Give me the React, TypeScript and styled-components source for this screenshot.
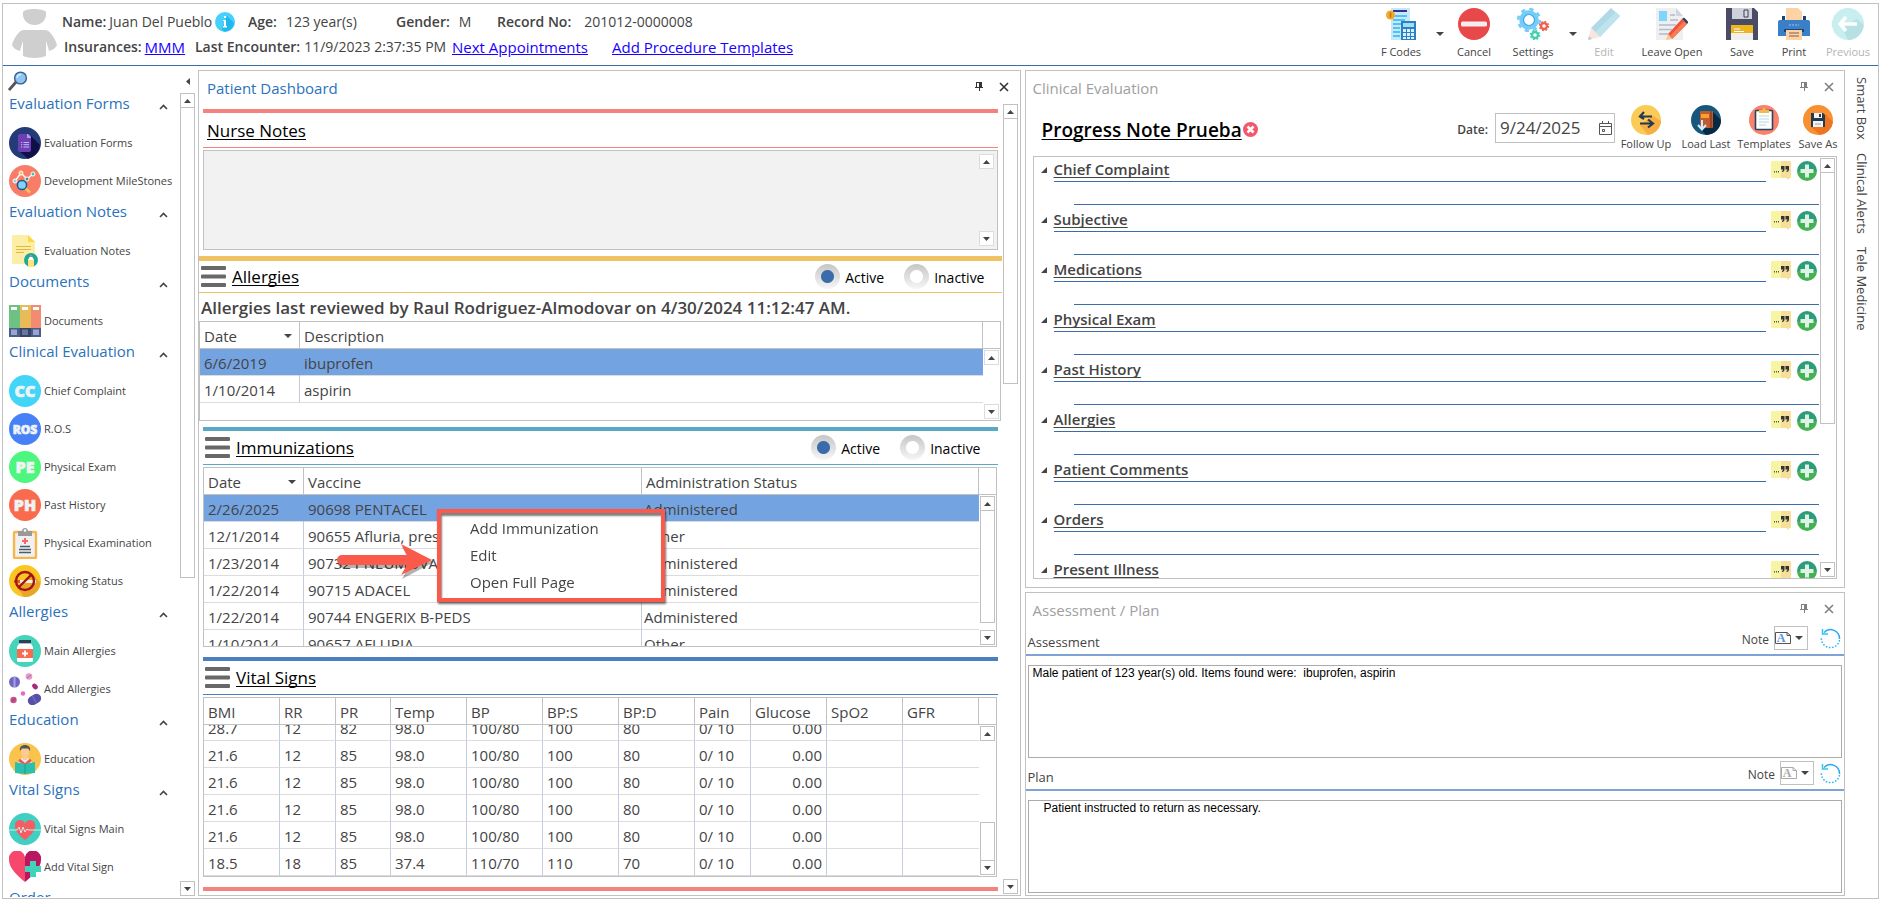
import React, { useEffect, useRef } from "react";
import styled, { createGlobalStyle, css } from "styled-components";

const color = {
  line: "#c1c1c1",
  softLine: "#dcdcdc",
  text: "#444444",
  blue: "#2a72bd",
  rule: "#3a6bab",
  select: "#74a3e1",
  muted: "#a0a0a0",
  salmon: "#f48380",
  amber: "#efc363",
  teal: "#58a9c6",
  royal: "#4a80bf",
};

const GlobalStyle = createGlobalStyle`
  * { box-sizing: border-box; }
  body {
    margin: 0;
    background: #ffffff;
    color: ${color.text};
    font-family: "Open Sans", "Noto Sans", sans-serif;
    font-size: 15px;
    line-height: 20px;
  }
  button, input, textarea { font: inherit; color: inherit; margin: 0; }
  button { border: 0; padding: 0; background: none; }
  svg { display: block; flex: none; }
  h1, h2, h3, p { margin: 0; font-weight: 400; }
`;

const Shell = styled.div`
  height: 100vh;
  padding: 3px 4px 4px 2px;
`;

const Frame = styled.div`
  height: 100%;
  display: flex;
  flex-direction: column;
  border: 1px solid ${color.line};
`;

/* ---------- patient header ---------- */

const Header = styled.header`
  flex: none;
  height: 62px;
  display: flex;
  border-bottom: 1px solid ${color.rule};
`;

const Avatar = styled.div`
  padding: 4px 5px 0 9px;
`;

const PatientInfo = styled.div`
  flex: 1;
  min-width: 0;
  display: flex;
  flex-direction: column;
  white-space: nowrap;
  padding-top: 5px;
`;

const InfoLine = styled.div<{ $indent?: number }>`
  display: flex;
  align-items: center;
  height: 25px;
  padding-left: ${(p) => p.$indent ?? 0}px;
`;

const Field = styled.div<{ $w?: number; $gap?: number }>`
  display: flex;
  align-items: center;
  gap: ${(p) => p.$gap ?? 4}px;
  width: ${(p) => (p.$w ? `${p.$w}px` : "auto")};
`;

const FieldLabel = styled.span`
  font-weight: 600;
  font-size: 14px;
`;

const FieldValue = styled.span`
  font-size: 14px;
`;

const InfoLink = styled.a`
  color: #1a00ff;
  font-size: 15px;
`;

const Toolbar = styled.div`
  display: flex;
  padding: 4px 2px 0 0;
`;

const ToolButton = styled.button<{ $w: number }>`
  width: ${(p) => p.$w}px;
  height: 52px;
  display: flex;
  flex-direction: column;
  align-items: center;
  justify-content: space-between;
  font-size: 11px;
  line-height: 16px;
  white-space: nowrap;
  &:disabled { color: #b4b4b4; }
  &:disabled svg { opacity: 0.4; }
`;

const CaretButton = styled.button`
  width: 15px;
  height: 52px;
  display: flex;
  align-items: center;
  justify-content: center;
`;

/* ---------- body ---------- */

const Body = styled.div`
  flex: 1;
  min-height: 0;
  display: flex;
`;

const Sidebar = styled.aside`
  flex: none;
  width: 195px;
  display: flex;
  flex-direction: column;
  padding: 4px 3px 1px 5px;
`;

const SidebarTop = styled.div`
  flex: none;
  height: 22px;
  display: flex;
  justify-content: space-between;
  padding-right: 5px;
`;

const SidebarBody = styled.div`
  flex: 1;
  min-height: 0;
  display: flex;
`;

const Nav = styled.nav`
  flex: 1;
  min-width: 0;
  overflow: hidden;
`;

const NavHeading = styled.button`
  display: flex;
  align-items: center;
  justify-content: space-between;
  width: 100%;
  height: 22px;
  margin-bottom: 10px;
  padding: 0 12px 0 1px;
  color: ${color.blue};
  svg { margin-top: 8px; }
`;

const NavItem = styled.button`
  display: flex;
  align-items: center;
  gap: 3px;
  width: 100%;
  height: 38px;
  padding-left: 1px;
  font-size: 11px;
  white-space: nowrap;
`;

const SidebarScroll = styled.div`
  display: flex;
  padding: 1px 0;
`;

const Panel = styled.section<{ $basis?: number }>`
  display: flex;
  flex-direction: column;
  min-width: 0;
  min-height: 0;
  border: 1px solid ${color.line};
  flex: ${(p) => (p.$basis === undefined ? "none" : `1 1 ${p.$basis}px`)};
`;

const Workspace = styled.main`
  flex: 1;
  min-width: 0;
  display: flex;
  gap: 4px;
  padding: 4px 0 2px;
`;

const RightColumn = styled.div`
  flex: 1 1 0;
  min-width: 0;
  display: flex;
  flex-direction: column;
  gap: 4px;
`;

const PanelBar = styled.div<{ $active?: boolean }>`
  flex: none;
  height: 33px;
  display: flex;
  align-items: center;
  padding: 0 9px 2px ${(p) => (p.$active ? 8 : 7)}px;
  color: ${(p) => (p.$active ? "#333333" : "#808080")};
`;

const PanelTitle = styled.h2<{ $active?: boolean }>`
  flex: 1;
  padding-top: 2px;
  font-size: 15px;
  color: ${(p) => (p.$active ? color.blue : color.muted)};
`;

const BarButton = styled.button`
  width: 25px;
  height: 20px;
  display: flex;
  align-items: center;
  justify-content: center;
  &:last-child { width: 13px; margin-left: 6px; }
`;

/* ---------- scroll bars ---------- */

const Scroll = styled.div<{ $soft?: boolean }>`
  --edge: ${(p) => (p.$soft ? color.softLine : color.line)};
  flex: none;
  width: 15px;
  display: flex;
  flex-direction: column;
`;

const ScrollButton = styled.button`
  flex: none;
  height: 15px;
  display: flex;
  align-items: center;
  justify-content: center;
  border: 1px solid var(--edge);
  background: #ffffff;
`;

const ScrollGap = styled.div<{ $size: number }>`
  flex: ${(p) => p.$size} 1 0;
`;

const ScrollThumb = styled.div<{ $size: number; $end?: boolean }>`
  flex: ${(p) => p.$size} 1 0;
  border: solid var(--edge);
  border-width: ${(p) => (p.$end ? "1px 1px 0" : "0 1px 1px")};
  background: #ffffff;
`;

/* ---------- dashboard ---------- */

const DashBody = styled.div`
  flex: 1;
  min-height: 0;
  display: flex;
`;

const DashMain = styled.div`
  flex: 1;
  min-width: 0;
  overflow: hidden;
  padding-top: 5px;
`;

const DashScroll = styled.div`
  display: flex;
  padding: 0 2px 1px 1px;
`;

const Widget = styled.section<{ $tint: string; $wide?: boolean; $gap: number }>`
  position: relative;
  margin: 0 ${(p) => (p.$wide ? 0 : 4)}px ${(p) => p.$gap}px ${(p) => (p.$wide ? 0 : 4)}px;
  border-top: ${(p) => (p.$wide ? 5 : 4)}px solid ${(p) => p.$tint};
`;

const WidgetHead = styled.div<{ $tint: string; $h: number; $indent: number }>`
  display: flex;
  align-items: center;
  height: ${(p) => p.$h}px;
  padding: 0 17px 0 ${(p) => p.$indent}px;
  border-bottom: 1px solid ${(p) => p.$tint};
  color: #000000;
`;

const WidgetTitle = styled.h3`
  flex: 1;
  padding-top: 1px;
  font-size: 17px;
  text-decoration: underline;
  text-decoration-thickness: 1px;
  text-underline-offset: 2px;
  text-decoration-skip-ink: none;
`;

const MenuButton = styled.button`
  display: flex;
  margin-right: 6px;
`;

const Choice = styled.label`
  display: flex;
  align-items: center;
  gap: 5px;
  font-size: 14px;
  & + & { margin-left: 20px; }
`;

const ChoiceText = styled.span`
  padding-top: 2px;
`;

const Radio = styled.input`
  appearance: none;
  width: 25px;
  height: 25px;
  border-radius: 50%;
  background:
    radial-gradient(circle, #ffffff 6px, transparent 7px),
    linear-gradient(#c6c6c6, #f6f6f6);
  &:checked {
    background:
      radial-gradient(circle, ${color.rule} 6px, transparent 7px),
      linear-gradient(#c6c6c6, #f6f6f6);
  }
`;

const NurseBox = styled.div`
  display: flex;
  height: 100px;
  margin-top: 2px;
  padding: 3px;
  border: 1px solid ${color.line};
  background: #f2f2f2;
`;

const NurseText = styled.textarea`
  flex: 1;
  border: 0;
  padding: 0;
  resize: none;
  outline: 0;
  overflow: hidden;
  background: transparent;
`;

const Reviewed = styled.p`
  height: 28px;
  padding: 2px 2px 0;
  font-size: 17px;
  line-height: 26px;
  font-weight: 600;
  white-space: nowrap;
`;

const GridBox = styled.div<{ $h: number; $gap?: number }>`
  display: flex;
  height: ${(p) => p.$h}px;
  margin: ${(p) => p.$gap ?? 0}px 1px 0 0;
  border: 1px solid ${color.line};
`;

const GridView = styled.div`
  flex: 1;
  min-width: 0;
  overflow: hidden;
`;

const GridSide = styled.div`
  flex: none;
  width: 17px;
  display: flex;
  flex-direction: column;
`;

const GridCap = styled.div`
  flex: none;
  height: 27px;
  border-bottom: 1px solid ${color.line};
`;

const GridScroll = styled.div`
  flex: 1;
  min-height: 0;
  display: flex;
  padding: 1px;
`;

const Table = styled.table`
  width: 100%;
  table-layout: fixed;
  border-spacing: 0;
`;

const Th = styled.th`
  position: sticky;
  top: 0;
  height: 27px;
  padding: 2px 7px 0 4px;
  border-right: 1px solid ${color.line};
  border-bottom: 1px solid ${color.line};
  background: #ffffff;
  font-weight: 400;
  text-align: left;
  white-space: nowrap;
`;

const ThInner = styled.span`
  display: flex;
  align-items: center;
  justify-content: space-between;
`;

const Tr = styled.tr<{ $selected?: boolean }>`
  ${(p) =>
    p.$selected &&
    css`
      td { background: ${color.select}; background-clip: padding-box; border-right-color: ${color.select}; }
    `}
`;

const Td = styled.td<{ $right?: boolean; $tight?: boolean }>`
  height: 27px;
  padding: 2px 4px 0 ${(p) => (p.$tight ? 2 : 4)}px;
  border-right: 1px solid #c3cddb;
  border-bottom: 1px solid ${color.softLine};
  text-align: ${(p) => (p.$right ? "right" : "left")};
  white-space: nowrap;
  overflow: hidden;
  &:last-child { border-right: 0; }
`;

const ContextMenu = styled.div`
  position: absolute;
  left: 234px;
  top: 78px;
  z-index: 3;
  width: 228px;
  height: 93px;
  display: flex;
  flex-direction: column;
  justify-content: center;
  padding-bottom: 2px;
  border: 4px solid #fb5a4b;
  background: #ffffff;
  box-shadow: 1px 2px 2px rgba(0, 0, 0, 0.55), inset 1px 3px 2px rgba(0, 0, 0, 0.5);
`;

const ContextItem = styled.button`
  height: 27px;
  padding-left: 29px;
  text-align: left;
`;

const Pointer = styled.div`
  position: absolute;
  left: 134px;
  top: 112px;
  z-index: 4;
`;

/* ---------- clinical evaluation ---------- */

const NoteHead = styled.div`
  flex: none;
  height: 52px;
  display: flex;
  align-items: center;
  padding: 0 1px 0 16px;
`;

const NoteTitle = styled.h2`
  font-size: 19px;
  line-height: 24px;
  font-weight: 600;
  color: #000000;
  text-decoration: underline;
  text-decoration-thickness: 1px;
  text-underline-offset: 2px;
  text-decoration-skip-ink: none;
`;

const RemoveNote = styled.button`
  display: flex;
  margin: 0 auto 2px 1px;
`;

const DateLabel = styled.label`
  font-size: 12px;
  font-weight: 600;
  margin-right: 7px;
`;

const DateBox = styled.div`
  width: 120px;
  height: 30px;
  display: flex;
  align-items: center;
  margin: -4px 0 0;
  padding: 0 2px 0 4px;
  border: 1px solid ${color.line};
`;

const DateInput = styled.input`
  flex: 1;
  min-width: 0;
  border: 0;
  padding: 0;
  outline: 0;
  font-size: 17px;
`;

const NoteAction = styled.button<{ $w: number }>`
  width: ${(p) => p.$w}px;
  height: 50px;
  display: flex;
  flex-direction: column;
  align-items: center;
  font-size: 11px;
  line-height: 18px;
  white-space: nowrap;
`;

const TreeBox = styled.div`
  flex: 1;
  min-height: 0;
  display: flex;
  margin: 0 7px 8px;
  border: 1px solid ${color.line};
`;

const Tree = styled.div`
  flex: 1;
  min-width: 0;
  overflow: hidden;
`;

const TreeScroll = styled.div`
  display: flex;
  padding: 1px;
`;

const TreeRow = styled.div`
  display: flex;
  height: 25px;
`;

const TreeToggle = styled.button`
  width: 20px;
  display: flex;
  align-items: center;
  padding-left: 7px;
`;

const TreeName = styled.h3`
  flex: 1;
  border-bottom: 1px solid ${color.rule};
  padding-top: 2px;
  font-size: 15px;
  font-weight: 600;
  text-decoration: underline;
  text-decoration-thickness: 1px;
  text-underline-offset: 2px;
  text-decoration-skip-ink: none;
`;

const TreeActions = styled.div`
  display: flex;
  align-items: flex-start;
  gap: 6px;
  padding: 4px 2px 0 5px;
`;

const TreeBody = styled.div`
  height: 23px;
  margin: 0 0 2px 40px;
  border-bottom: 1px solid ${color.rule};
`;

/* ---------- assessment ---------- */

const BlockHead = styled.div`
  display: flex;
  align-items: center;
  height: 30px;
  padding: 0 3px 4px 2px;
  border-bottom: 2px solid #7ea3d4;
`;

const BlockLabel = styled.label`
  flex: 1;
  padding-top: 8px;
  font-size: 13px;
`;

const NoteWord = styled.span`
  padding-top: 4px;
  margin-right: 5px;
  font-size: 12px;
`;

const NoteButton = styled.button<{ $space: number }>`
  width: 34px;
  height: 24px;
  display: flex;
  align-items: center;
  gap: 4px;
  margin-right: ${(p) => p.$space}px;
  border: 1px solid ${color.line};
`;

const BlockText = styled.textarea<{ $indent?: boolean }>`
  display: block;
  height: 93px;
  margin: 9px 2px 3px;
  padding: 0 ${(p) => (p.$indent ? 15 : 4)}px;
  border: 1px solid #ababab;
  resize: none;
  outline: 0;
  color: #000000;
  font-family: "Liberation Sans", Arial, sans-serif;
  font-size: 12px;
  line-height: 14px;
  &:last-child { margin-bottom: 2px; }
`;

const Strip = styled.aside`
  flex: none;
  width: 33px;
  display: flex;
  flex-direction: column;
  align-items: center;
  gap: 13px;
  padding-top: 11px;
`;

const StripTab = styled.button`
  writing-mode: vertical-rl;
  font-size: 13px;
  line-height: 20px;
`;

/* ---------- glyphs ---------- */

const Caret = ({ up }: { up?: boolean }) => (
  <svg width="7" height="4" viewBox="0 0 7 4" fill="#444">
    <path d={up ? "M0 4L3.500 0L7 4Z" : "M0 0H7L3.500 4Z"} />
  </svg>
);

const DropCaret = () => (
  <svg width="8" height="4" viewBox="0 0 8 4" fill="#444">
    <path d="M0 0H8L4 4Z" />
  </svg>
);

const Pin = () => (
  <svg width="8" height="9" viewBox="0 0 8 9" fill="currentColor">
    <path d="M1 0H7V5H8V6H5V9H4V6H0V5H1ZM2 1V5H4V1Z" />
  </svg>
);

const Cross = () => (
  <svg width="10" height="10" viewBox="0 0 10 10" stroke="currentColor" strokeWidth="1.600">
    <path d="M1 1L9 9M9 1L1 9" />
  </svg>
);

const Chevron = () => (
  <svg width="9" height="6" viewBox="0 0 9 6" fill="none" stroke="#444" strokeWidth="1.600">
    <path d="M1 5L4.500 1.500L8 5" />
  </svg>
);

const Burger = () => (
  <svg width="25" height="21" viewBox="0 0 25 21" fill="#686868">
    <rect width="25" height="4" rx="1" />
    <rect y="8.500" width="25" height="4" rx="1" />
    <rect y="17" width="25" height="4" rx="1" />
  </svg>
);

const Person = () => (
  <svg width="45" height="50" viewBox="0 0 45 50" fill="#cfcfcf">
    <path d="M11 4C13 0 31 0 34 4C35 11 30 17 22.500 17S10 11 11 4Z" />
    <path d="M12 22H33C38 22 43 30 45 37C43 41 40 42 37 43C36 39 35 36 34 33V48C28 50.500 17 50.500 11 48V33C10 36 9 39 8 43C5 42 2 41 0 37C2 30 7 22 12 22Z" />
  </svg>
);

const Info = () => (
  <svg width="20" height="20" viewBox="0 0 20 20">
    <circle cx="10" cy="10" r="10" fill="#47d0fb" />
    <path d="M12 4L19 11A10 10 0 0 1 9 19.800L7 17Z" fill="#20b7ee" />
    <path d="M9 4H11V6H9ZM8 8H11V14H12V15.500H8V14H9V9H8Z" fill="#fff" />
  </svg>
);

const Magnifier = () => (
  <svg width="20" height="20" viewBox="0 0 20 20">
    <path d="M1 19L8 11" stroke="#555" strokeWidth="2.800" />
    <circle cx="12.500" cy="7" r="5.900" fill="#8ec5f6" stroke="#3c5a86" strokeWidth="1.400" />
    <path d="M9 7A4 4 0 0 1 13 3.500" stroke="#d5ecff" strokeWidth="1.500" fill="none" />
  </svg>
);

const Badge = ({ fill, text }: { fill: string; text: string }) => (
  <svg width="32" height="32" viewBox="0 0 32 32">
    <circle cx="16" cy="16" r="16" fill={fill} />
    <text
      x="16"
      y={text.length > 2 ? 20.500 : 22}
      textAnchor="middle"
      fontFamily="Open Sans, sans-serif"
      fontWeight="800"
      fontSize={text.length > 2 ? 12 : 16}
      fill="#eef3f3"
      stroke="#eef3f3"
      strokeWidth="0.700"
    >
      {text}
    </text>
  </svg>
);

const navIcons: Record<string, React.ReactNode> = {
  forms: (
    <svg width="32" height="32" viewBox="0 0 32 32">
      <circle cx="16" cy="16" r="16" fill="#253b78" />
      <path d="M22 9L31 18A16 16 0 0 1 19 31.700L10 24Z" fill="#111046" />
      <path d="M11 7H19L22 10V23A2 2 0 0 1 20 25H11A2 2 0 0 1 9 23V9A2 2 0 0 1 11 7Z" fill="#6c40b5" />
      <path d="M19 7L22 10V11H18V7Z" fill="#b49ae0" />
      <path d="M12 15.500H13.200M14.500 15.500H20M12 17.700H13.200M14.500 17.700H20M12 20H13.200M14.500 20H20" stroke="#c9b8ee" />
    </svg>
  ),
  milestones: (
    <svg width="32" height="32" viewBox="0 0 32 32">
      <circle cx="16" cy="16" r="16" fill="#f97c66" />
      <path d="M6 16L12 8L18 14L24 9" stroke="#fff" strokeWidth="1.400" fill="none" />
      <circle cx="6" cy="16" r="2" fill="#7ed6f0" stroke="#fff" />
      <circle cx="12" cy="8" r="2" fill="#f6c358" stroke="#fff" />
      <circle cx="18" cy="14" r="2" fill="#30988a" stroke="#fff" />
      <circle cx="24" cy="9" r="2" fill="#38c5b4" stroke="#fff" />
      <path d="M16 23L21 27.500" stroke="#f6c358" strokeWidth="2.600" />
      <circle cx="13" cy="20" r="4.600" fill="#78d5ff" stroke="#22568c" strokeWidth="1.500" />
    </svg>
  ),
  notes: (
    <svg width="32" height="32" viewBox="0 0 32 32">
      <path d="M3 0H19L26 7V29H3Z" fill="#fceea6" />
      <path d="M19 0L26 7H19Z" fill="#f9d93b" />
      <path d="M7 11.500H22M7 14.500H22M7 17.500H15" stroke="#e0b93c" strokeWidth="1.200" />
      <circle cx="22" cy="25" r="7" fill="#1fa79b" />
      <path d="M19 32V25L22 20L25 25V32Z" fill="#fce37a" />
      <path d="M19 25L22 20L25 25Z" fill="#fff" />
      <path d="M21 21.800L22 20L23 21.800Z" fill="#444" />
    </svg>
  ),
  documents: (
    <svg width="32" height="32" viewBox="0 0 32 32">
      <path d="M0 0H11V23H0Z" fill="#6dc283" />
      <path d="M11 0H22V23H11Z" fill="#e8bb58" />
      <path d="M22 0H32V23H22Z" fill="#f18b72" />
      <path d="M0 23H11V32H0ZM22 23H32V32H22Z" fill="#4d5c85" />
      <path d="M11 23H22V32H11Z" fill="#35446b" />
      <path d="M2 2H8V5H2ZM13 2H19V5H13ZM24 2H30V5H24Z" fill="#fff" />
      <path d="M2 24.500H8V30H2ZM24 24.500H30V30H24Z" fill="#98a5d2" />
      <path d="M13 24.500H19V30H13Z" fill="#687699" />
    </svg>
  ),
  cc: <Badge fill="#42d5f7" text="CC" />,
  ros: <Badge fill="#4781f7" text="ROS" />,
  pe: <Badge fill="#4df67d" text="PE" />,
  ph: <Badge fill="#fa6a4d" text="PH" />,
  exam: (
    <svg width="32" height="32" viewBox="0 0 32 32">
      <rect x="5" y="5" width="22" height="26" rx="1" fill="#f0f0f0" stroke="#f6b64c" strokeWidth="2.400" />
      <path d="M9 4H13C13 0 19 0 19 4H23V9H9Z" fill="#9a9a9a" />
      <circle cx="16" cy="3.500" r="1.300" fill="#fff" />
      <path d="M16 11V17M13 14H19" stroke="#f5696a" strokeWidth="2" />
      <path d="M11 19.500H21M10 22.500H22M10 25.500H22" stroke="#465e6c" strokeWidth="1.300" />
    </svg>
  ),
  smoking: (
    <svg width="32" height="32" viewBox="0 0 32 32">
      <circle cx="16" cy="16" r="16" fill="#fac61f" />
      <path d="M24 9L31.500 18A16 16 0 0 1 15 32L9 24Z" fill="#e9a52a" />
      <path d="M5 15H27V18H5Z" fill="#f4eee0" />
      <path d="M5 15H11V18H5Z" fill="#e0562d" />
      <circle cx="16" cy="16" r="9" fill="none" stroke="#a31414" strokeWidth="2.400" />
      <path d="M22.500 9.500L9.500 22.500" stroke="#a31414" strokeWidth="2.400" />
    </svg>
  ),
  allergies: (
    <svg width="32" height="32" viewBox="0 0 32 32">
      <circle cx="16" cy="16" r="16" fill="#44d4bb" />
      <rect x="10" y="5" width="12" height="3.500" fill="#2c4052" />
      <path d="M10 8.500H22L24 12V26A1.500 1.500 0 0 1 22.500 27H9.500A1.500 1.500 0 0 1 8 26V12Z" fill="#fff" />
      <rect x="8" y="14" width="16" height="9" fill="#f96b50" />
      <path d="M16 15.500V21.500M13 18.500H19" stroke="#fff" strokeWidth="1.800" />
    </svg>
  ),
  pills: (
    <svg width="32" height="32" viewBox="0 0 32 32">
      <circle cx="5.500" cy="9" r="5.500" fill="#6f66c2" />
      <path d="M5.500 4V14" stroke="#a79fe4" strokeWidth="2" />
      <circle cx="20" cy="3.500" r="3.300" fill="#e39ac7" />
      <path d="M18 5L22 2" stroke="#c563a4" />
      <ellipse cx="26" cy="13.500" rx="3.200" ry="2.300" fill="#a82978" transform="rotate(45 26 13.500)" />
      <circle cx="14" cy="20.500" r="2.200" fill="#ee65bd" />
      <circle cx="4.500" cy="27" r="3.200" fill="#c8548e" />
      <path d="M2.500 28.500L6.500 25.500" stroke="#93306a" />
      <rect x="18.500" y="22" width="14" height="9" rx="4.500" fill="#5850a8" transform="rotate(-30 25.500 26.500)" />
      <path d="M23.500 23L27 29.500" stroke="#8078cf" />
    </svg>
  ),
  education: (
    <svg width="32" height="32" viewBox="0 0 32 32">
      <circle cx="16" cy="16" r="16" fill="#f9c34c" />
      <path d="M9 20C9 16 12 15 16 15S23 16 23 20V24H9Z" fill="#eef1f2" />
      <path d="M11 15.500L16 20L21 15.500L23 18L16 23L9 18Z" fill="#ee5a52" />
      <path d="M12 7A4 5 0 0 1 20 7V10A4 4 0 0 1 12 10Z" fill="#fbcb94" />
      <path d="M14 12H18V17H14Z" fill="#fbcb94" />
      <path d="M11 8C10 4 13 2 16 2S22 4 21 8L19 5.500H13Z" fill="#555" />
      <path d="M6 19L16 21L26 19V30L16 31L6 30Z" fill="#2bbfae" />
      <path d="M16 21V31" stroke="#1c9c90" />
    </svg>
  ),
  vitals: (
    <svg width="32" height="32" viewBox="0 0 32 32">
      <circle cx="16" cy="16" r="16" fill="#40cfc0" />
      <path d="M16 27C10 22 6 18 6 13.500A5 5 0 0 1 16 11A5 5 0 0 1 26 13.500C26 18 22 22 16 27Z" fill="#f65c61" />
      <path d="M0 17H8L10 14L12 20L14 14L16 19L18 16L19 17H32" stroke="#c9f0ec" fill="none" />
    </svg>
  ),
  addVital: (
    <svg width="32" height="32" viewBox="0 0 32 32">
      <path d="M16 31C7 24 0 16 0 9A8 8 0 0 1 16 6Z" fill="#f8476c" />
      <path d="M16 31C25 24 32 16 32 9A8 8 0 0 0 16 6Z" fill="#ba1661" />
      <path d="M21 10H27V15H32V21H27V26H21V21H16V15H21Z" fill="#3fd3ba" />
    </svg>
  ),
};

const toolIcons: Record<string, React.ReactNode> = {
  codes: (
    <svg width="32" height="32" viewBox="0 0 32 32">
      <path d="M6 0H25V32H6Z" fill="#c5e9fb" />
      <path d="M8 3H22" stroke="#35338f" strokeWidth="2" />
      <path d="M8 8H22M8 12H20M8 16H16M8 20H15M8 24H15M8 28H15" stroke="#4fc4f4" strokeWidth="2" />
      <circle cx="5.500" cy="7" r="4.500" fill="#f3a927" />
      <path d="M5.500 4.500V9.500" stroke="#c26c10" strokeWidth="1.500" />
      <rect x="16" y="13" width="15" height="19" fill="#2b7fc4" />
      <path d="M18 15H29V19H18Z" fill="#a3dfe8" />
      <path d="M18 21H21V24H18ZM22 21H25V24H22ZM26 21H29V24H26ZM18 25H21V28H18ZM22 25H25V28H22ZM26 25H29V28H26ZM18 29H21V31H18ZM22 29H25V31H22ZM26 29H29V31H26Z" fill="#d8f0fb" />
    </svg>
  ),
  cancel: (
    <svg width="32" height="32" viewBox="0 0 32 32">
      <circle cx="16" cy="16" r="16" fill="#e84849" />
      <rect x="3" y="13.500" width="26" height="5" rx="1.500" fill="#f6eeee" />
    </svg>
  ),
  settings: (
    <svg width="32" height="32" viewBox="0 0 32 32" fill="none">
      <circle cx="12" cy="12" r="7.500" stroke="#74cdf8" strokeWidth="4.500" />
      <circle cx="12" cy="12" r="10.800" stroke="#74cdf8" strokeWidth="2.600" strokeDasharray="4.200 4.280" />
      <circle cx="12" cy="12" r="5.500" stroke="#3ba7e8" strokeWidth="1.200" />
      <circle cx="27" cy="18" r="3" stroke="#ef6250" strokeWidth="2.400" />
      <circle cx="27" cy="18" r="4.600" stroke="#ef6250" strokeWidth="1.400" strokeDasharray="1.800 1.810" />
      <circle cx="18" cy="27" r="3" stroke="#45d0ad" strokeWidth="2.400" />
      <circle cx="18" cy="27" r="4.600" stroke="#45d0ad" strokeWidth="1.400" strokeDasharray="1.800 1.810" />
    </svg>
  ),
  edit: (
    <svg width="32" height="32" viewBox="0 0 32 32">
      <path d="M3 20L23 0L32 8L12 29Z" fill="#3fa0bf" />
      <path d="M7 24L28 4L32 8L12 29Z" fill="#5eb8d5" />
      <path d="M3 20L12 29L0 32Z" fill="#f3bfae" />
      <path d="M1 28L4 31L0 32Z" fill="#777" />
    </svg>
  ),
  leave: (
    <svg width="32" height="32" viewBox="0 0 32 32">
      <path d="M0 0H20L27 8V32H0Z" fill="#efefef" />
      <path d="M20 0L27 8H20Z" fill="#cfd6dd" />
      <path d="M3 3H11V13H3Z" fill="#7fd4fb" />
      <path d="M14 7H19M14 12H22M3 17H20M3 21.500H16M3 26H12" stroke="#aebcd0" strokeWidth="1.500" />
      <path d="M12 26L26 11L31 16L16 31Z" fill="#f0503c" />
      <path d="M14 28L28 13L31 16L16 31Z" fill="#f77b55" />
      <path d="M26 11L28 9.500L32.500 14L31 16Z" fill="#2f3d57" />
      <path d="M12 26L16 31L10 32Z" fill="#f6c98e" />
    </svg>
  ),
  save: (
    <svg width="32" height="32" viewBox="0 0 32 32">
      <path d="M0 0H28L32 4V32H0Z" fill="#4a4c66" />
      <path d="M6 0H26V11H6Z" fill="#cfd2da" />
      <path d="M18 2H22V9H18Z" fill="#d9dbe2" stroke="#3b3d55" />
      <path d="M5 17H27V32H5Z" fill="#f0f0ee" />
      <path d="M5 17H27V25H5Z" fill="#eeb51c" />
      <path d="M8 21H14M8 23.500H18" stroke="#fff" strokeWidth="1.200" />
    </svg>
  ),
  print: (
    <svg width="32" height="32" viewBox="0 0 32 32">
      <path d="M8 0H20L24 4V12H8Z" fill="#fbd3a4" />
      <path d="M4 8H7V12H25V8H28V13H4Z" fill="#20426f" />
      <path d="M2 12H30A2 2 0 0 1 32 14V28H0V14A2 2 0 0 1 2 12Z" fill="#3a80c8" />
      <path d="M6 21H26V24H6Z" fill="#20426f" />
      <path d="M8 22H24V32H8Z" fill="#fbd3a4" />
      <path d="M11 25H21M11 28H21" stroke="#8b5b4d" strokeWidth="1.200" />
      <path d="M11 17H21" stroke="#9cc3ec" strokeDasharray="2 1" />
    </svg>
  ),
  previous: (
    <svg width="32" height="32" viewBox="0 0 32 32">
      <circle cx="16" cy="16" r="16" fill="#77d5d8" />
      <path d="M25 11L31.500 17A16 16 0 0 1 16 32L10 20Z" fill="#4cb3ba" />
      <path d="M25 16H8M14 9L8 16L14 23" stroke="#fff" strokeWidth="3.500" fill="none" />
    </svg>
  ),
};

const actionIcons: Record<string, React.ReactNode> = {
  follow: (
    <svg width="30" height="30" viewBox="0 0 30 30">
      <circle cx="15" cy="15" r="15" fill="#fbcb57" />
      <path d="M22 11L30 16A15 15 0 0 1 17 30L9 20Z" fill="#f6ad43" />
      <path d="M21 11.500H9M13 7L9 11.500L13 14M9 18.500H21M17 14.500L22 18.500L17 22.500" stroke="#263a4e" strokeWidth="2.200" fill="none" />
    </svg>
  ),
  load: (
    <svg width="30" height="30" viewBox="0 0 30 30">
      <circle cx="15" cy="15" r="15" fill="#17577d" />
      <path d="M22 7L30 15A15 15 0 0 1 15 30L9 23Z" fill="#062a44" />
      <rect x="9" y="6" width="13" height="17" rx="1" fill="#c25a31" />
      <path d="M10 9H18V13H10Z" fill="#f4a328" />
      <path d="M20 6V23" stroke="#8e3d1e" strokeWidth="1.500" />
      <path d="M11 15V24M7 20L11 24.500L15 20" stroke="#cdeeff" strokeWidth="2" fill="none" />
    </svg>
  ),
  templates: (
    <svg width="30" height="30" viewBox="0 0 30 30">
      <circle cx="15" cy="15" r="15" fill="#f8826b" />
      <rect x="6.500" y="5.500" width="17" height="19" rx="1" fill="#fff" stroke="#294560" strokeWidth="1.600" />
      <path d="M10 5H13L15 2.500L17 5H20V8H10Z" fill="#f6b84c" />
      <path d="M10 11H20M10 14H20M10 17H20M10 20H17" stroke="#b7d9e4" strokeWidth="1.200" />
    </svg>
  ),
  saveAs: (
    <svg width="30" height="30" viewBox="0 0 30 30">
      <circle cx="15" cy="15" r="15" fill="#f88f31" />
      <path d="M22 9L30 17A15 15 0 0 1 17 30L8 22Z" fill="#ef7421" />
      <path d="M8 8H20L22 10V22H8Z" fill="#253a4e" />
      <path d="M11 8H19V13H11ZM10 16H20V22H10Z" fill="#f1f3f4" />
      <path d="M16 9H18V12H16Z" fill="#253a4e" />
      <path d="M12 19H18" stroke="#9aa7b2" />
    </svg>
  ),
};

const RemoveIcon = () => (
  <svg width="15" height="15" viewBox="0 0 15 15">
    <circle cx="7.500" cy="7.500" r="7.500" fill="#f4566b" />
    <path d="M4.500 4.500L10.500 10.500M10.500 4.500L4.500 10.500" stroke="#fff" strokeWidth="2.600" />
  </svg>
);

const CalendarIcon = () => (
  <svg width="13" height="14" viewBox="0 0 13 14" fill="none" stroke="#555">
    <path d="M0.500 2.500H12.500V13.500H0.500ZM0.500 5.500H12.500M3.500 0V3M9.500 0V3M3.500 8.500H5.500V10.500H3.500Z" />
  </svg>
);

const TreeCaret = () => (
  <svg width="6" height="6" viewBox="0 0 6 6" fill="#444">
    <path d="M6 0V6H0Z" />
  </svg>
);

const QuoteIcon = () => (
  <svg width="20" height="19" viewBox="0 0 20 19">
    <path d="M1 0H10V17H1A1 1 0 0 1 0 16V1A1 1 0 0 1 1 0Z" fill="#f7f5a3" />
    <path d="M10 0H19A1 1 0 0 1 20 1V16A1 1 0 0 1 19 17H18V19L15 17H10Z" fill="#f5df9b" />
    <path d="M3 10.800H9" stroke="#555" strokeDasharray="1 1" strokeWidth="1.400" />
    <path d="M10 5H13.500V8.500C13.500 10 12.500 11 11 11V10C11.800 9.800 12 9 12 8.500H10ZM14.500 5H18V8.500C18 10 17 11 15.500 11V10C16.300 9.800 16.500 9 16.500 8.500H14.500Z" fill="#333" />
  </svg>
);

const AddIcon = () => (
  <svg width="20" height="20" viewBox="0 0 20 20">
    <path d="M0 10A10 10 0 0 1 20 10Z" fill="#2c9c7b" />
    <path d="M0 10A10 10 0 0 0 20 10Z" fill="#44b155" />
    <path d="M8 3.500H12V8H16.500V12H12V16.500H8V12H3.500V8H8Z" fill="#def3e4" />
  </svg>
);

const ResetIcon = () => (
  <svg width="21" height="21" viewBox="0 0 21 21" fill="none">
    <path d="M4 4.500A9 9 0 0 1 19.500 11" stroke="#2ba8f4" strokeWidth="1.500" />
    <path d="M19.500 12A9 9 0 0 1 1.500 9" stroke="#2bb4f4" strokeWidth="1.500" strokeDasharray="1.600 1.600" />
    <path d="M2.500 1V6H8" stroke="#2fc3f3" strokeWidth="1.500" />
  </svg>
);

const TextIcon = ({ ink, edge }: { ink: string; edge: string }) => (
  <svg width="16" height="12" viewBox="0 0 16 12" fill="none">
    <path d="M0.500 0.500H12L15.500 3.500V11.500H0.500ZM12 0.500V3.500H15.500" stroke={edge} />
    <text x="6" y="10" textAnchor="middle" fontFamily="Liberation Serif, serif" fontWeight="700" fontSize="12" fill={ink}>
      A
    </text>
  </svg>
);

const ArrowMark = () => (
  <svg width="98" height="36" viewBox="0 0 98 36">
    <path d="M5 13H70L64 2L96 17L64 34L70 23H5A5 5 0 0 1 5 13Z" fill="#000" opacity="0.300" transform="translate(1 2)" />
    <path d="M5 12H70L64 1L95 17L64 32L70 22H5A5 5 0 0 1 5 12Z" fill="#fb5a4b" />
  </svg>
);

/* ---------- data ---------- */

const navGroups = [
  { name: "Evaluation Forms", items: [["forms", "Evaluation Forms"], ["milestones", "Development MileStones"]] },
  { name: "Evaluation Notes", items: [["notes", "Evaluation Notes"]] },
  { name: "Documents", items: [["documents", "Documents"]] },
  {
    name: "Clinical Evaluation",
    items: [
      ["cc", "Chief Complaint"],
      ["ros", "R.O.S"],
      ["pe", "Physical Exam"],
      ["ph", "Past History"],
      ["exam", "Physical Examination"],
      ["smoking", "Smoking Status"],
    ],
  },
  { name: "Allergies", items: [["allergies", "Main Allergies"], ["pills", "Add Allergies"]] },
  { name: "Education", items: [["education", "Education"]] },
  { name: "Vital Signs", items: [["vitals", "Vital Signs Main"], ["addVital", "Add Vital Sign"]] },
  { name: "Order", items: [] as string[][] },
];

const allergies = [
  ["6/6/2019", "ibuprofen"],
  ["1/10/2014", "aspirin"],
];

const immunizations = [
  ["2/26/2025", "90698 PENTACEL", "Administered"],
  ["12/1/2014", "90655 Afluria, preservative", "Other"],
  ["1/23/2014", "90732 PNEUMOVAX", "Administered"],
  ["1/22/2014", "90715 ADACEL", "Administered"],
  ["1/22/2014", "90744 ENGERIX B-PEDS", "Administered"],
  ["1/10/2014", "90657 AFLURIA", "Other"],
];

const vitalColumns: [string, number | undefined][] = [
  ["BMI", 76],
  ["RR", 56],
  ["PR", 55],
  ["Temp", 76],
  ["BP", 76],
  ["BP:S", 76],
  ["BP:D", 76],
  ["Pain", 56],
  ["Glucose", 76],
  ["SpO2", 76],
  ["GFR", undefined],
];

const steady = ["21.6", "12", "85", "98.0", "100/80", "100", "80", "0/ 10", "0.00", "", ""];
const vitals = [
  ["28.7", "12", "82", "98.0", "100/80", "100", "80", "0/ 10", "0.00", "", ""],
  steady,
  steady,
  steady,
  steady,
  ["18.5", "18", "85", "37.4", "110/70", "110", "70", "0/ 10", "0.00", "", ""],
];

const noteSections = [
  "Chief Complaint",
  "Subjective",
  "Medications",
  "Physical Exam",
  "Past History",
  "Allergies",
  "Patient Comments",
  "Orders",
  "Present Illness",
];

/* ---------- composed parts ---------- */

const ScrollBar = ({
  before = 0,
  thumb = 0,
  after = 1,
  soft,
}: {
  before?: number;
  thumb?: number;
  after?: number;
  soft?: boolean;
}) => (
  <Scroll $soft={soft}>
    <ScrollButton aria-label="Scroll up">
      <Caret up />
    </ScrollButton>
    {before > 0 && <ScrollGap $size={before} />}
    {thumb > 0 && <ScrollThumb $size={thumb} $end={before > 0} />}
    {after > 0 && <ScrollGap $size={after} />}
    <ScrollButton aria-label="Scroll down">
      <Caret />
    </ScrollButton>
  </Scroll>
);

const TitleBar = ({ title, active }: { title: string; active?: boolean }) => (
  <PanelBar $active={active}>
    <PanelTitle $active={active}>{title}</PanelTitle>
    <BarButton aria-label="Pin">
      <Pin />
    </BarButton>
    <BarButton aria-label="Close">
      <Cross />
    </BarButton>
  </PanelBar>
);

const StatusChoice = ({ name }: { name: string }) => (
  <>
    <Choice>
      <Radio type="radio" name={name} defaultChecked />
      <ChoiceText>Active</ChoiceText>
    </Choice>
    <Choice>
      <Radio type="radio" name={name} />
      <ChoiceText>Inactive</ChoiceText>
    </Choice>
  </>
);

interface DataGridProps {
  columns: [string, number | undefined][];
  rows: string[][];
  height: number;
  gap?: number;
  sorted?: boolean;
  selected?: number;
  rightColumn?: number;
  tightColumn?: number;
  atEnd?: boolean;
  scroll: React.ReactNode;
}

const DataGrid = (p: DataGridProps) => {
  const view = useRef<HTMLDivElement>(null);
  useEffect(() => {
    if (p.atEnd && view.current) view.current.scrollTop = view.current.scrollHeight;
  }, [p.atEnd]);
  return (
    <GridBox $h={p.height} $gap={p.gap}>
      <GridView ref={view}>
        <Table>
          <colgroup>
            {p.columns.map(([name, width]) => (
              <col key={name} width={width} />
            ))}
          </colgroup>
          <thead>
            <tr>
              {p.columns.map(([name], i) => (
                <Th key={name}>
                  <ThInner>
                    {name}
                    {p.sorted && i === 0 && <DropCaret />}
                  </ThInner>
                </Th>
              ))}
            </tr>
          </thead>
          <tbody>
            {p.rows.map((row, r) => (
              <Tr key={r} $selected={r === p.selected}>
                {row.map((cell, c) => (
                  <Td key={c} $right={c === p.rightColumn} $tight={c === p.tightColumn}>
                    {cell}
                  </Td>
                ))}
              </Tr>
            ))}
          </tbody>
        </Table>
      </GridView>
      <GridSide>
        <GridCap />
        <GridScroll>{p.scroll}</GridScroll>
      </GridSide>
    </GridBox>
  );
};

const Tool = ({ icon, label, w, disabled }: { icon: string; label: string; w: number; disabled?: boolean }) => (
  <ToolButton $w={w} disabled={disabled}>
    {toolIcons[icon]}
    {label}
  </ToolButton>
);

const PatientHeader = () => (
  <Header>
    <Avatar>
      <Person />
    </Avatar>
    <PatientInfo>
      <InfoLine>
        <Field $w={186} $gap={3}>
          <FieldLabel>Name:</FieldLabel>
          <FieldValue>Juan Del Pueblo</FieldValue>
          <Info />
        </Field>
        <Field $w={148} $gap={9}>
          <FieldLabel>Age:</FieldLabel>
          <FieldValue>123 year(s)</FieldValue>
        </Field>
        <Field $w={101} $gap={9}>
          <FieldLabel>Gender:</FieldLabel>
          <FieldValue>M</FieldValue>
        </Field>
        <Field $gap={13}>
          <FieldLabel>Record No:</FieldLabel>
          <FieldValue>201012-0000008</FieldValue>
        </Field>
      </InfoLine>
      <InfoLine $indent={2}>
        <Field $w={131} $gap={3}>
          <FieldLabel>Insurances:</FieldLabel>
          <InfoLink href="#insurance">MMM</InfoLink>
        </Field>
        <Field $w={257}>
          <FieldLabel>Last Encounter:</FieldLabel>
          <FieldValue>11/9/2023 2:37:35 PM</FieldValue>
        </Field>
        <Field $w={160}>
          <InfoLink href="#appointments">Next Appointments</InfoLink>
        </Field>
        <InfoLink href="#templates">Add Procedure Templates</InfoLink>
      </InfoLine>
    </PatientInfo>
    <Toolbar>
      <Tool icon="codes" label="F Codes" w={62} />
      <CaretButton aria-label="F Codes options">
        <DropCaret />
      </CaretButton>
      <Tool icon="cancel" label="Cancel" w={54} />
      <Tool icon="settings" label="Settings" w={64} />
      <CaretButton aria-label="Settings options">
        <DropCaret />
      </CaretButton>
      <Tool icon="edit" label="Edit" w={48} disabled />
      <Tool icon="leave" label="Leave Open" w={88} />
      <Tool icon="save" label="Save" w={52} />
      <Tool icon="print" label="Print" w={52} />
      <Tool icon="previous" label="Previous" w={56} disabled />
    </Toolbar>
  </Header>
);

const SideNav = () => (
  <Sidebar>
    <SidebarTop>
      <button aria-label="Search">
        <Magnifier />
      </button>
      <button aria-label="Collapse">
        <svg width="4" height="7" viewBox="0 0 4 7" fill="#444">
          <path d="M4 0V7L0 3.500Z" />
        </svg>
      </button>
    </SidebarTop>
    <SidebarBody>
      <Nav>
        {navGroups.map((g) => (
          <React.Fragment key={g.name}>
            <NavHeading>
              {g.name}
              <Chevron />
            </NavHeading>
            {g.items.map(([icon, label]) => (
              <NavItem key={label}>
                {navIcons[icon]}
                {label}
              </NavItem>
            ))}
          </React.Fragment>
        ))}
      </Nav>
      <SidebarScroll>
        <ScrollBar thumb={470} after={304} />
      </SidebarScroll>
    </SidebarBody>
  </Sidebar>
);

const Dashboard = () => (
  <Panel $basis={1}>
    <TitleBar title="Patient Dashboard" active />
    <DashBody>
      <DashMain>
        <Widget $tint={color.salmon} $gap={6}>
          <WidgetHead $tint={color.salmon} $h={35} $indent={4}>
            <WidgetTitle id="nurse-notes">Nurse Notes</WidgetTitle>
          </WidgetHead>
          <NurseBox>
            <NurseText aria-labelledby="nurse-notes" readOnly />
            <ScrollBar soft />
          </NurseBox>
        </Widget>

        <Widget $tint={color.amber} $gap={6} $wide>
          <WidgetHead $tint={color.amber} $h={32} $indent={2}>
            <MenuButton aria-label="Allergies menu">
              <Burger />
            </MenuButton>
            <WidgetTitle>Allergies</WidgetTitle>
            <StatusChoice name="allergy-status" />
          </WidgetHead>
          <Reviewed>Allergies last reviewed by Raul Rodriguez-Almodovar on 4/30/2024 11:12:47 AM.</Reviewed>
          <DataGrid
            columns={[["Date", 100], ["Description", undefined]]}
            rows={allergies}
            height={100}
            sorted
            selected={0}
            scroll={<ScrollBar soft />}
          />
        </Widget>

        <Widget $tint={color.teal} $gap={10}>
          <WidgetHead $tint={color.teal} $h={34} $indent={2}>
            <MenuButton aria-label="Immunizations menu">
              <Burger />
            </MenuButton>
            <WidgetTitle>Immunizations</WidgetTitle>
            <StatusChoice name="immunization-status" />
          </WidgetHead>
          <DataGrid
            columns={[["Date", 100], ["Vaccine", 338], ["Administration Status", undefined]]}
            rows={immunizations}
            height={180}
            gap={2}
            sorted
            selected={0}
            tightColumn={2}
            scroll={<ScrollBar thumb={112} after={7} />}
          />
          <ContextMenu role="menu">
            <ContextItem role="menuitem">Add Immunization</ContextItem>
            <ContextItem role="menuitem">Edit</ContextItem>
            <ContextItem role="menuitem">Open Full Page</ContextItem>
          </ContextMenu>
          <Pointer>
            <ArrowMark />
          </Pointer>
        </Widget>

        <Widget $tint={color.royal} $gap={10}>
          <WidgetHead $tint={color.royal} $h={34} $indent={2}>
            <MenuButton aria-label="Vital Signs menu">
              <Burger />
            </MenuButton>
            <WidgetTitle>Vital Signs</WidgetTitle>
          </WidgetHead>
          <DataGrid
            columns={vitalColumns}
            rows={vitals}
            height={180}
            gap={2}
            rightColumn={8}
            atEnd
            scroll={<ScrollBar before={82} thumb={37} after={0} />}
          />
        </Widget>

        <Widget $tint={color.salmon} $gap={0} />
      </DashMain>
      <DashScroll>
        <ScrollBar thumb={264} after={496} />
      </DashScroll>
    </DashBody>
  </Panel>
);

const ClinicalEvaluation = () => (
  <Panel $basis={0}>
    <TitleBar title="Clinical Evaluation" />
    <NoteHead>
      <NoteTitle>Progress Note Prueba</NoteTitle>
      <RemoveNote aria-label="Remove note">
        <RemoveIcon />
      </RemoveNote>
      <DateLabel htmlFor="note-date">Date:</DateLabel>
      <DateBox>
        <DateInput id="note-date" defaultValue="9/24/2025" />
        <button aria-label="Open calendar">
          <CalendarIcon />
        </button>
      </DateBox>
      <NoteAction $w={62}>
        {actionIcons.follow}
        Follow Up
      </NoteAction>
      <NoteAction $w={58}>
        {actionIcons.load}
        Load Last
      </NoteAction>
      <NoteAction $w={58}>
        {actionIcons.templates}
        Templates
      </NoteAction>
      <NoteAction $w={50}>
        {actionIcons.saveAs}
        Save As
      </NoteAction>
    </NoteHead>
    <TreeBox>
      <Tree>
        {noteSections.map((name) => (
          <React.Fragment key={name}>
            <TreeRow>
              <TreeToggle aria-label={`Toggle ${name}`}>
                <TreeCaret />
              </TreeToggle>
              <TreeName>{name}</TreeName>
              <TreeActions>
                <button aria-label={`Comment on ${name}`}>
                  <QuoteIcon />
                </button>
                <button aria-label={`Add to ${name}`}>
                  <AddIcon />
                </button>
              </TreeActions>
            </TreeRow>
            <TreeBody />
          </React.Fragment>
        ))}
      </Tree>
      <TreeScroll>
        <ScrollBar thumb={251} after={138} />
      </TreeScroll>
    </TreeBox>
  </Panel>
);

const AssessmentPlan = () => (
  <Panel>
    <TitleBar title="Assessment / Plan" />
    <BlockHead>
      <BlockLabel htmlFor="assessment">Assessment</BlockLabel>
      <NoteWord>Note</NoteWord>
      <NoteButton $space={12} aria-label="Assessment note">
        <TextIcon ink="#5a93dc" edge="#555555" />
        <DropCaret />
      </NoteButton>
      <button aria-label="Reset assessment">
        <ResetIcon />
      </button>
    </BlockHead>
    <BlockText
      id="assessment"
      defaultValue="Male patient of 123 year(s) old. Items found were:  ibuprofen, aspirin"
    />
    <BlockHead>
      <BlockLabel htmlFor="plan">Plan</BlockLabel>
      <NoteWord>Note</NoteWord>
      <NoteButton $space={6} aria-label="Plan note">
        <TextIcon ink="#aaaaaa" edge="#aaaaaa" />
        <DropCaret />
      </NoteButton>
      <button aria-label="Reset plan">
        <ResetIcon />
      </button>
    </BlockHead>
    <BlockText id="plan" $indent defaultValue="Patient instructed to return as necessary." />
  </Panel>
);

export default function App() {
  return (
    <>
      <GlobalStyle />
      <Shell>
        <Frame>
          <PatientHeader />
          <Body>
            <SideNav />
            <Workspace>
              <Dashboard />
              <RightColumn>
                <ClinicalEvaluation />
                <AssessmentPlan />
              </RightColumn>
            </Workspace>
            <Strip>
              <StripTab>Smart Box</StripTab>
              <StripTab>Clinical Alerts</StripTab>
              <StripTab>Tele Medicine</StripTab>
            </Strip>
          </Body>
        </Frame>
      </Shell>
    </>
  );
}
